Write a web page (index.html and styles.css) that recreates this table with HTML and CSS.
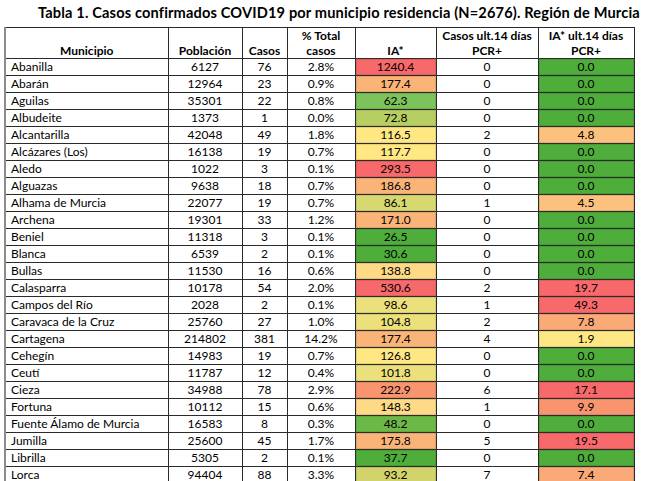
FILE: index.html
```html
<!DOCTYPE html>
<html lang="es">
<head>
<meta charset="utf-8">
<title>Tabla 1</title>
<link rel="stylesheet" href="styles.css">
</head>
<body>
<div class="title">Tabla 1. Casos confirmados COVID19 por municipio residencia (N=2676). Región de Murcia</div>
<table class="tbl">
<colgroup>
<col class="w-mun"><col class="w-pob"><col class="w-cas"><col class="w-pct"><col class="w-ia"><col class="w-c14"><col class="w-ia14">
</colgroup>
<thead>
<tr><th class="mun">Municipio</th><th>Población</th><th>Casos</th><th>% Total<br>casos</th><th>IA*</th><th>Casos ult.14 días<br>PCR+</th><th>IA* ult.14 días<br>PCR+</th></tr>
</thead>
<tbody>
<tr><td class="mun">Abanilla</td><td>6127</td><td>76</td><td>2.8%</td><td class="c red">1240.4</td><td>0</td><td class="c green">0.0</td></tr>
<tr><td class="mun">Abarán</td><td>12964</td><td>23</td><td>0.9%</td><td class="c orange">177.4</td><td>0</td><td class="c green">0.0</td></tr>
<tr><td class="mun">Aguilas</td><td>35301</td><td>22</td><td>0.8%</td><td class="c lgreen">62.3</td><td>0</td><td class="c green">0.0</td></tr>
<tr><td class="mun">Albudeite</td><td>1373</td><td>1</td><td>0.0%</td><td class="c olive">72.8</td><td>0</td><td class="c green">0.0</td></tr>
<tr><td class="mun">Alcantarilla</td><td>42048</td><td>49</td><td>1.8%</td><td class="c yellow">116.5</td><td>2</td><td class="c lorange">4.8</td></tr>
<tr><td class="mun">Alcázares (Los)</td><td>16138</td><td>19</td><td>0.7%</td><td class="c yellow">117.7</td><td>0</td><td class="c green">0.0</td></tr>
<tr><td class="mun">Aledo</td><td>1022</td><td>3</td><td>0.1%</td><td class="c red">293.5</td><td>0</td><td class="c green">0.0</td></tr>
<tr><td class="mun">Alguazas</td><td>9638</td><td>18</td><td>0.7%</td><td class="c orange">186.8</td><td>0</td><td class="c green">0.0</td></tr>
<tr><td class="mun">Alhama de Murcia</td><td>22077</td><td>19</td><td>0.7%</td><td class="c yolive">86.1</td><td>1</td><td class="c lorange">4.5</td></tr>
<tr><td class="mun">Archena</td><td>19301</td><td>33</td><td>1.2%</td><td class="c orange">171.0</td><td>0</td><td class="c green">0.0</td></tr>
<tr><td class="mun">Beniel</td><td>11318</td><td>3</td><td>0.1%</td><td class="c green">26.5</td><td>0</td><td class="c green">0.0</td></tr>
<tr><td class="mun">Blanca</td><td>6539</td><td>2</td><td>0.1%</td><td class="c green">30.6</td><td>0</td><td class="c green">0.0</td></tr>
<tr><td class="mun">Bullas</td><td>11530</td><td>16</td><td>0.6%</td><td class="c oyellow">138.8</td><td>0</td><td class="c green">0.0</td></tr>
<tr><td class="mun">Calasparra</td><td>10178</td><td>54</td><td>2.0%</td><td class="c red">530.6</td><td>2</td><td class="c red">19.7</td></tr>
<tr><td class="mun">Campos del Río</td><td>2028</td><td>2</td><td>0.1%</td><td class="c ylive">98.6</td><td>1</td><td class="c red">49.3</td></tr>
<tr><td class="mun">Caravaca de la Cruz</td><td>25760</td><td>27</td><td>1.0%</td><td class="c ylive">104.8</td><td>2</td><td class="c orange2">7.8</td></tr>
<tr><td class="mun">Cartagena</td><td>214802</td><td>381</td><td>14.2%</td><td class="c orange">177.4</td><td>4</td><td class="c yellow">1.9</td></tr>
<tr><td class="mun">Cehegín</td><td>14983</td><td>19</td><td>0.7%</td><td class="c yellow">126.8</td><td>0</td><td class="c green">0.0</td></tr>
<tr><td class="mun">Ceutí</td><td>11787</td><td>12</td><td>0.4%</td><td class="c ylive">101.8</td><td>0</td><td class="c green">0.0</td></tr>
<tr><td class="mun">Cieza</td><td>34988</td><td>78</td><td>2.9%</td><td class="c ored">222.9</td><td>6</td><td class="c red">17.1</td></tr>
<tr><td class="mun">Fortuna</td><td>10112</td><td>15</td><td>0.6%</td><td class="c oyellow">148.3</td><td>1</td><td class="c ored">9.9</td></tr>
<tr><td class="mun">Fuente Álamo de Murcia</td><td>16583</td><td>8</td><td>0.3%</td><td class="c mgreen">48.2</td><td>0</td><td class="c green">0.0</td></tr>
<tr><td class="mun">Jumilla</td><td>25600</td><td>45</td><td>1.7%</td><td class="c orange">175.8</td><td>5</td><td class="c red">19.5</td></tr>
<tr><td class="mun">Librilla</td><td>5305</td><td>2</td><td>0.1%</td><td class="c green">37.7</td><td>0</td><td class="c green">0.0</td></tr>
<tr><td class="mun">Lorca</td><td>94404</td><td>88</td><td>3.3%</td><td class="c olive2">93.2</td><td>7</td><td class="c orange2">7.4</td></tr>
</tbody>
</table>
</body>
</html>
```
FILE: styles.css
```css
html, body {
  margin: 0;
  padding: 0;
  background: #ffffff;
}
body {
  font-family: Lato, "Liberation Sans", sans-serif;
  color: #000000;
  width: 650px;
  height: 481px;
  overflow: hidden;
}
.title {
  font-weight: 700;
  font-size: 14.6px;
  letter-spacing: 0.15px;
  line-height: 18px;
  padding: 4px 0 0 38px;
  height: 23px;
  white-space: nowrap;
}
.tbl {
  margin-left: 4px;
  border-collapse: collapse;
  table-layout: fixed;
  width: 629px;
  font-size: 12px;
}
.w-mun { width: 163px; }
.w-pob { width: 74px; }
.w-cas { width: 45px; }
.w-pct { width: 68px; }
.w-ia { width: 81px; }
.w-c14 { width: 102px; }
.w-ia14 { width: 96px; }
.tbl th, .tbl td {
  border: 1px solid #2b2b2b;
  text-align: center;
  vertical-align: bottom;
  white-space: nowrap;
  overflow: hidden;
}
.tbl th {
  font-weight: 700;
  height: 30px;
  line-height: 15px;
  padding: 0 2px 0;
}
.tbl td {
  height: 15px;
  line-height: 14px;
  padding: 0 3px 1px;
}
.tbl .mun {
  border-left: 2px solid #8c8c8c;
}
.tbl td.mun {
  text-align: left;
  padding-left: 5px;
}
.tbl td.c {
  box-shadow: inset 0 0 0 1px rgba(0, 0, 0, 0.10);
}
.red { background: #f8696b; }
.ored { background: #f8956f; }
.orange { background: #fbb478; }
.orange2 { background: #faaa77; }
.lorange { background: #fcc27d; }
.oyellow { background: #fed986; }
.yellow { background: #ffe884; }
.ylive { background: #ebe07b; }
.yolive { background: #d8d870; }
.olive { background: #b7cf62; }
.olive2 { background: #d2d46b; }
.lgreen { background: #7cc35a; }
.mgreen { background: #6cb948; }
.green { background: #4fad3c; }
```
